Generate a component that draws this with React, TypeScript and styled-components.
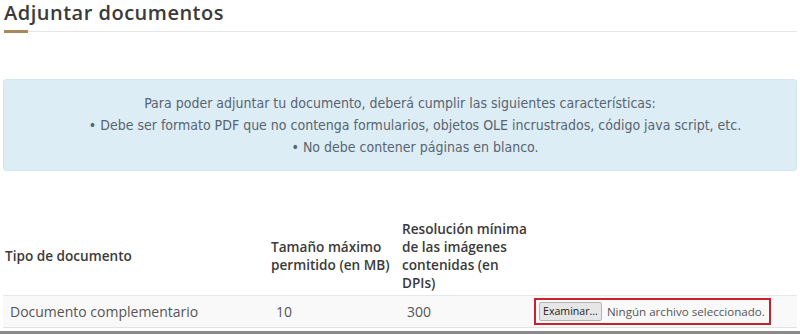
import React from "react";
import styled, { createGlobalStyle } from "styled-components";

const Global = createGlobalStyle`
  html, body { margin: 0; padding: 0; background: #fff; }
  body { font-family: "Open Sans", "DejaVu Sans", sans-serif; color: #333; }
`;

const Page = styled.div`
  width: 800px;
  height: 334px;
  overflow: hidden;
  position: relative;
  box-sizing: border-box;
  padding: 1px 3px 0;
`;

const Title = styled.h2`
  margin: 0;
  padding: 0 0 0 1px;
  font-family: "Open Sans", sans-serif;
  font-weight: 600;
  font-size: 20px;
  letter-spacing: 0.5px;
  line-height: 23px;
  color: #3a3a3a;
`;

const Rule = styled.div`
  position: relative;
  margin-top: 7px;
  height: 1px;
  background: #e6e6e6;
  margin-left: 1px;
  &::before {
    content: "";
    position: absolute;
    left: 0;
    top: -1px;
    width: 24px;
    height: 3px;
    background: #a8875a;
  }
`;

const Alert = styled.div`
  margin-top: 47px;
  height: 92px;
  box-sizing: border-box;
  background: #dcedf6;
  border: 1px solid #d2e7f1;
  border-radius: 3px;
  display: flex;
  flex-direction: column;
  justify-content: center;
  font-family: "DejaVu Sans Condensed", "Liberation Sans Narrow", "Roboto", sans-serif;
  font-stretch: condensed;
  font-size: 14px;
  line-height: 22px;
  color: #5a6470;
  text-align: center;
`;

const Intro = styled.p`
  margin: 0;
`;

const Requirements = styled.ul`
  margin: 0;
  padding: 0 0 0 30px;
  list-style: none;
`;

const Requirement = styled.li``;

const Table = styled.table`
  margin-top: 49px;
  width: 100%;
  border-collapse: collapse;
  table-layout: fixed;
  font-family: "Open Sans", sans-serif;
  font-size: 14px;
`;

const Th = styled.th<{ $w?: number }>`
  text-align: left;
  vertical-align: middle;
  font-weight: 600;
  font-size: 13.6px;
  color: #3a3a3a;
  line-height: 18px;
  padding: 0 0 3px 2px;
  width: ${(p) => (p.$w ? `${p.$w}px` : "auto")};
  border-bottom: 1px solid #e8e8e8;
`;

const Td = styled.td<{ $pad?: number }>`
  padding: 0 0 0 ${(p) => p.$pad ?? 7}px;
  height: 31px;
  color: #555;
  background: #f9f9f9;
  border-bottom: 1px solid #e3e3e3;
  vertical-align: middle;
  white-space: nowrap;
`;

const FileBox = styled.label`
  display: inline-flex;
  align-items: center;
  gap: 5px;
  border: 2px solid #c8232c;
  padding: 2px 4px 2px 3px;
  font-size: 11.6px;
  color: #555;
`;

const BrowseButton = styled.span`
  display: inline-block;
  background: #e6e6e6;
  border: 1px solid #b5b5b5;
  border-radius: 2px;
  padding: 0 3px;
  line-height: 17px;
  color: #222;
  font-size: 10.6px;
`;

const BottomBar = styled.div`
  position: absolute;
  left: 0;
  right: 0;
  bottom: 0;
  height: 3px;
  background: #8a8a8a;
`;

export default function App() {
  return (
    <Page>
      <Global />
      <Title>Adjuntar documentos</Title>
      <Rule />
      <Alert>
        <Intro>Para poder adjuntar tu documento, deberá cumplir las siguientes características:</Intro>
        <Requirements>
          <Requirement>• Debe ser formato PDF que no contenga formularios, objetos OLE incrustrados, código java script, etc.</Requirement>
          <Requirement>• No debe contener páginas en blanco.</Requirement>
        </Requirements>
      </Alert>
      <Table>
        <thead>
          <tr>
            <Th $w={264}>Tipo de documento</Th>
            <Th $w={129}>Tamaño máximo<br />permitido (en MB)</Th>
            <Th $w={128}>Resolución mínima<br />de las imágenes<br />contenidas (en<br />DPIs)</Th>
            <Th></Th>
          </tr>
        </thead>
        <tbody>
          <tr>
            <Td>Documento complementario</Td>
            <Td>10</Td>
            <Td>300</Td>
            <Td $pad={4}>
              <FileBox>
                <BrowseButton>Examinar...</BrowseButton>
                Ningún archivo seleccionado.
              </FileBox>
            </Td>
          </tr>
        </tbody>
      </Table>
      <BottomBar />
    </Page>
  );
}
